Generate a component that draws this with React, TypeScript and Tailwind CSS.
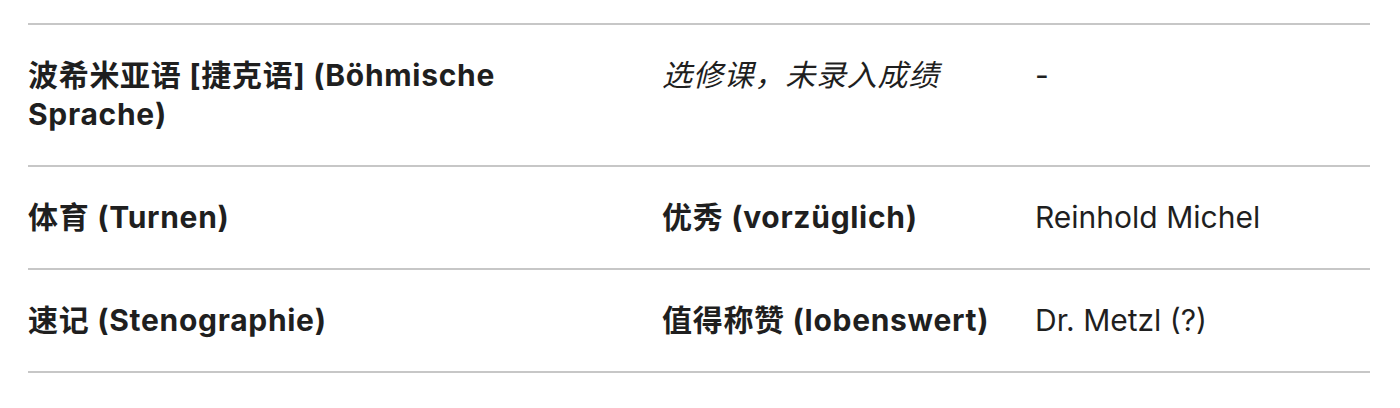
import React from "react";

interface Row {
  subject: string;
  grade: string;
  gradeItalic?: boolean;
  teacher: string;
}

const rows: Row[] = [
  {
    subject: "波希米亚语 [捷克语] (Böhmische Sprache)",
    grade: "选修课，未录入成绩",
    gradeItalic: true,
    teacher: "-",
  },
  { subject: "体育 (Turnen)", grade: "优秀 (vorzüglich)", teacher: "Reinhold Michel" },
  { subject: "速记 (Stenographie)", grade: "值得称赞 (lobenswert)", teacher: "Dr. Metzl (?)" },
];

export default function App() {
  return (
    <div
      className="w-[1400px] h-[408px] bg-white pt-[23px] pl-[28px] pr-[30px] text-[#1f1f1f]"
      style={{ fontFamily: 'Inter, "Noto Sans CJK SC", sans-serif' }}
    >
      <div className="border-t-2 border-[#c7c7c7]">
        {rows.map((r) => (
          <div
            key={r.subject}
            className="grid grid-cols-[634px_373px_1fr] border-b-2 border-[#c7c7c7] py-[31px] text-[30px] leading-[39px]"
          >
            <div className="font-bold tracking-[0.7px] pr-[80px]">{r.subject}</div>
            <div
              className={
                r.gradeItalic ? "italic tracking-[0.8px] pr-4" : "font-bold tracking-[0.7px] pr-4"
              }
            >
              {r.grade}
            </div>
            <div>{r.teacher}</div>
          </div>
        ))}
      </div>
    </div>
  );
}
